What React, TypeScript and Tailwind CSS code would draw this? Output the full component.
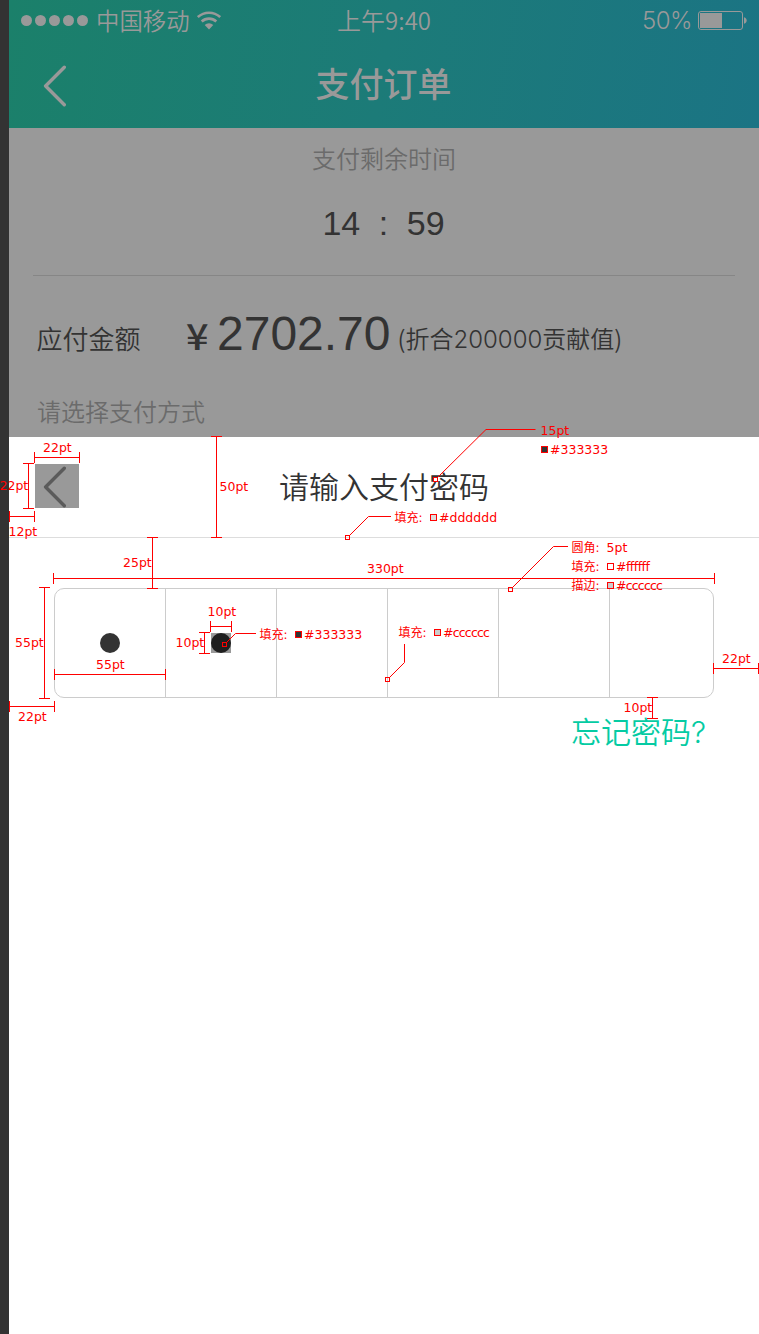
import React from "react";

const cjk = "font-['Noto_Sans_CJK_SC',sans-serif]";

function Chevron({ className }: { className: string }) {
  return (
    <svg width="24" height="42" viewBox="0 0 24 42" fill="none" className={className}>
      <path d="M21.300 2.300 2.600 21 21.300 39.700" stroke="currentColor" strokeWidth="3.400" strokeLinecap="round" strokeLinejoin="round" />
    </svg>
  );
}

function StatusBar() {
  return (
    <div className="relative flex h-10 items-center justify-between pl-3 pr-[11px]">
      <div className="flex items-center">
        <div className="flex gap-[3px]">
          {[0, 1, 2, 3, 4].map((n) => (
            <span key={n} className="size-[11px] rounded-full bg-[#999]" />
          ))}
        </div>
        <span className="ml-[8px] text-[23.400px] leading-10 font-[350]">中国移动</span>
        <svg width="24" height="19" viewBox="0 0 24 19" fill="none" stroke="currentColor" strokeWidth="2.6" className="ml-[7.500px]">
          <path d="M.8 6.1a16.4 16.4 0 0 1 22.4 0" />
          <path d="M4.7 10.5a10.6 10.6 0 0 1 14.6 0" />
          <path d="M12 18.4 7.7 14a6.2 6.2 0 0 1 8.6 0Z" fill="currentColor" stroke="none" />
        </svg>
      </div>
      <div className="flex items-center">
        <span className="pt-px font-['Inter',sans-serif] text-[24px] leading-[42px] font-light tracking-[-0.500px]">50%</span>
        <svg width="50" height="20" viewBox="0 0 50 20" className="ml-[6px]">
          <rect x="0.500" y="1.500" width="44" height="18" rx="2.5" fill="none" stroke="currentColor" />
          <path d="M2 3H24V18H2Z" fill="currentColor" />
          <path d="M46 7.2c3.600 1 3.600 5.600 0 6.600Z" fill="currentColor" />
        </svg>
      </div>
      <span className="absolute inset-x-0 top-0 text-center text-[24px] leading-10 font-[350]">上午9:40</span>
    </div>
  );
}

function OrderSummary() {
  return (
    <section className="h-[309px] bg-[#999] text-[#333]">
      <p className="pt-[12px] text-center text-[24px] leading-9 font-[350] text-[#6b6b6b]">支付剩余时间</p>
      <div className="mt-[25px] flex h-11 items-center justify-center gap-[18.500px] pr-px font-['Liberation_Sans',sans-serif] text-[34px]">
        <span>14</span>
        <span>:</span>
        <span>59</span>
      </div>
      <div className="mx-6 mt-[30px] h-px bg-[#868686]" />
      <div className="flex h-[100px] items-baseline pl-[27.500px] pt-[28px]">
        <span className="relative top-[-1px] w-[149px] text-[26px] leading-[60px] font-[350]">应付金额</span>
        <span className="w-[31.500px]">
          <span className="inline-block origin-left scale-x-110 text-[36px] leading-[60px] font-medium">¥</span>
        </span>
        <span className="font-['Liberation_Sans',sans-serif] text-[48px] leading-[60px]">2702.70</span>
        <span className="relative top-[-2px] ml-[7px] text-[24px] leading-[60px] font-[350]">
          (折合<span className="font-['Inter',sans-serif] font-light">200000</span>贡献值)
        </span>
      </div>
      <p className="pl-7 pt-[17px] text-[24px] leading-9 font-[350] text-[#6b6b6b]">请选择支付方式</p>
    </section>
  );
}

function PasswordPanel() {
  return (
    <section className="flex flex-col text-[#333]">
      <div className="flex h-[101px] items-start border-b border-[#ddd] pl-[26px] pt-[27px]">
        <button className="flex size-11 items-center bg-[#999] pl-2 text-[#5b5b5b]">
          <Chevron className="relative top-px" />
        </button>
        <h2 className="-mt-px ml-[200px] text-[30px] leading-[44px] font-[350]">请输入支付密码</h2>
      </div>
      <div className="ml-[45px] mt-[50px] flex h-[110px] w-[660px] rounded-[10px] border border-[#ccc]">
        <div className="flex w-[111px] items-center justify-center border-r border-[#ccc]">
          <span className="size-5 rounded-full bg-[#333]" />
        </div>
        <div className="flex w-[111px] items-center justify-center border-r border-[#ccc]">
          <span className="size-5 bg-[#999]">
            <span className="block size-5 rounded-full bg-[#1f1f1f]" />
          </span>
        </div>
        <div className="w-[111px] border-r border-[#ccc]" />
        <div className="w-[111px] border-r border-[#ccc]" />
        <div className="w-[111px] border-r border-[#ccc]" />
        <div className="flex-1" />
      </div>
      <a className="mr-[53px] mt-[10px] self-end text-[30px] leading-[44px] font-[350] text-[#05cba3]">
        忘记密码<span className="font-['Inter',sans-serif] text-[30px] font-light">?</span>
      </a>
    </section>
  );
}

const horizontals = [
  [34, 79, 457], [9, 34, 516], [53, 714, 578], [54, 165, 674], [9, 54, 706], [210, 231, 626], [713, 758, 668],
];
const verticals = [
  [28, 463, 508], [216, 436, 537], [152, 537, 588], [44, 587, 698], [204, 632, 653], [652, 697, 718],
];
const anchors = [[433, 477], [345, 535], [508, 587], [385, 677], [222, 642]];
const leaders = [
  "M535.500 429.500H486L437.500 477.500",
  "M391 516.500H368.500L349.500 535.500",
  "M568 546.500H553.500L512.500 587.500",
  "M404.500 644V662.500L389.500 677.500",
  "M256 633.500H235.500L226.500 642.500",
];

function Label({ at, children }: { at: string; children: React.ReactNode }) {
  return <span className={`absolute whitespace-pre leading-4 ${at}`}>{children}</span>;
}

function Swatch({ at }: { at: string }) {
  return <span className={`absolute size-[7px] border border-[#f00] ${at}`} />;
}

function Annotations() {
  return (
    <div className="pointer-events-none absolute inset-0 overflow-hidden font-['DejaVu_Sans','Noto_Sans_CJK_SC',sans-serif] text-[12.5px] text-[#f00]">
      <svg width="759" height="1334" viewBox="0 0 759 1334" className="absolute inset-0" fill="none" stroke="#f00">
        {horizontals.map(([a, b, y]) => (
          <path key={`h${a}-${y}`} d={`M${a} ${y + 0.5}H${b + 1}M${a + 0.5} ${y - 5}v11M${b + 0.5} ${y - 5}v11`} />
        ))}
        {verticals.map(([x, a, b]) => (
          <path key={`v${x}`} d={`M${x + 0.5} ${a}V${b + 1}M${x - 5} ${a + 0.5}h11M${x - 5} ${b + 0.5}h11`} />
        ))}
        {leaders.map((d) => (
          <path key={d} d={d} />
        ))}
        {anchors.map(([x, y]) => (
          <rect key={`a${x}`} x={x + 0.5} y={y + 0.5} width="4" height="4" />
        ))}
      </svg>
      <Label at="left-[43px] top-[440px]">22pt</Label>
      <Label at="left-[-0.500px] top-[478px]">22pt</Label>
      <Label at="left-[8.500px] top-[524px]">12pt</Label>
      <Label at="left-[219.500px] top-[479px]">50pt</Label>
      <Label at="left-[123px] top-[555px]">25pt</Label>
      <Label at="left-[367px] top-[561px]">330pt</Label>
      <Label at="left-[15px] top-[635px]">55pt</Label>
      <Label at="left-[96px] top-[657px]">55pt</Label>
      <Label at="left-[18px] top-[709px]">22pt</Label>
      <Label at="left-[207.500px] top-[604px]">10pt</Label>
      <Label at="left-[175.500px] top-[635px]">10pt</Label>
      <Label at="left-[722px] top-[651px]">22pt</Label>
      <Label at="left-[623.500px] top-[700px]">10pt</Label>
      <Label at="left-[540.500px] top-[423px]">15pt</Label>
      <Label at="left-[550px] top-[442px]">#333333</Label>
      <Swatch at="left-[541px] top-[446px] bg-[#333]" />
      <Label at="left-[394.500px] top-[510px] text-[12px]">填充:</Label>
      <Swatch at="left-[430px] top-[514px] bg-[#ddd]" />
      <Label at="left-[439px] top-[510px]">#dddddd</Label>
      <Label at="left-[571.500px] top-[540px] text-[12px]">圆角:</Label>
      <Label at="left-[606.500px] top-[540px]">5pt</Label>
      <Label at="left-[571.500px] top-[559px] text-[12px]">填充:</Label>
      <Swatch at="left-[607px] top-[563px] bg-white" />
      <Label at="left-[616px] top-[559px] tracking-[-0.500px]">#ffffff</Label>
      <Label at="left-[571.500px] top-[578px] text-[12px]">描边:</Label>
      <Swatch at="left-[607px] top-[582px] bg-[#ccc]" />
      <Label at="left-[616px] top-[578px] tracking-[-0.800px]">#cccccc</Label>
      <Label at="left-[259.500px] top-[627px] text-[12px]">填充:</Label>
      <Swatch at="left-[295px] top-[631px] bg-[#333]" />
      <Label at="left-[304px] top-[627px]">#333333</Label>
      <Label at="left-[398.500px] top-[625px] text-[12px]">填充:</Label>
      <Swatch at="left-[434px] top-[629px] bg-[#ccc]" />
      <Label at="left-[443px] top-[625px] tracking-[-0.800px]">#cccccc</Label>
    </div>
  );
}

export default function App() {
  return (
    <div className={`relative flex h-[1334px] w-[759px] overflow-hidden bg-white ${cjk}`}>
      <div className="w-[9px] shrink-0 bg-[#333]" />
      <main className="w-[750px]">
        <header className="h-32 bg-linear-[100deg,#1b806a,#1c7b78_50%,#1b7484] text-[#999]">
          <StatusBar />
          <div className="relative flex h-[88px] items-start justify-center">
            <Chevron className="absolute left-[34px] top-[25px]" />
            <h1 className="pr-px text-[34px] leading-[86px] font-medium">支付订单</h1>
          </div>
        </header>
        <OrderSummary />
        <PasswordPanel />
      </main>
      <Annotations />
    </div>
  );
}
